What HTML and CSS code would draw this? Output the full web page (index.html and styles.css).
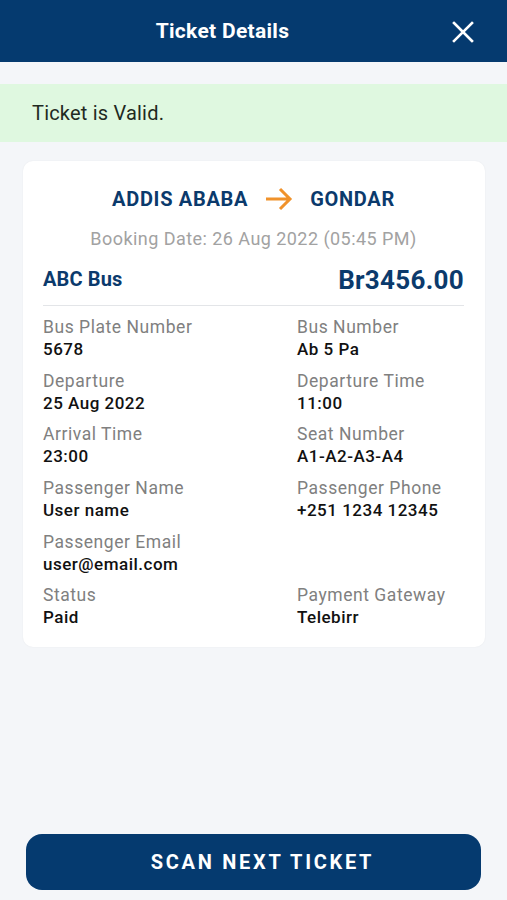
FILE: index.html
```html
<!DOCTYPE html>
<html>
<head>
<meta charset="utf-8">
<link rel="stylesheet" href="styles.css">
</head>
<body>
<div class="screen">
  <header class="topbar">
    <span class="title">Ticket Details</span>
    <span class="close">
      <svg width="22" height="22" viewBox="0 0 22 22"><path d="M2 2 L20 20 M20 2 L2 20" stroke="#fff" stroke-width="2.6" stroke-linecap="square" fill="none"/></svg>
    </span>
  </header>
  <div class="banner">Ticket is Valid.</div>
  <section class="card">
    <div class="route">
      <span>ADDIS ABABA</span>
      <svg class="arrow" width="28" height="24" viewBox="0 0 28 24"><path d="M1 12 H25 M15 2 L25 12 L15 22" stroke="#f0922b" stroke-width="3" fill="none" stroke-linejoin="miter"/></svg>
      <span>GONDAR</span>
    </div>
    <div class="booking">Booking Date: 26 Aug 2022 (05:45 PM)</div>
    <div class="operator">
      <span class="bus">ABC Bus</span>
      <span class="price">Br3456.00</span>
    </div>
    <div class="divider"></div>
    <div class="grid">
      <div class="field"><div class="label">Bus Plate Number</div><div class="value">5678</div></div>
      <div class="field"><div class="label">Bus Number</div><div class="value">Ab 5 Pa</div></div>
      <div class="field"><div class="label">Departure</div><div class="value">25 Aug 2022</div></div>
      <div class="field"><div class="label">Departure Time</div><div class="value">11:00</div></div>
      <div class="field"><div class="label">Arrival Time</div><div class="value">23:00</div></div>
      <div class="field"><div class="label">Seat Number</div><div class="value">A1-A2-A3-A4</div></div>
      <div class="field"><div class="label">Passenger Name</div><div class="value">User name</div></div>
      <div class="field"><div class="label">Passenger Phone</div><div class="value">+251 1234 12345</div></div>
      <div class="field"><div class="label">Passenger Email</div><div class="value">user@email.com</div></div>
      <div class="field"></div>
      <div class="field"><div class="label">Status</div><div class="value">Paid</div></div>
      <div class="field"><div class="label">Payment Gateway</div><div class="value">Telebirr</div></div>
    </div>
  </section>
  <div class="footer">
    <button class="scan">SCAN NEXT TICKET</button>
  </div>
</div>
</body>
</html>
```
FILE: styles.css
```css
* { box-sizing: border-box; }
html, body { margin: 0; padding: 0; }
body {
  font-family: Roboto, "Noto Sans", sans-serif;
  background: #f4f6f9;
}
.screen {
  display: flex;
  flex-direction: column;
  min-height: 900px;
}
.topbar {
  height: 62px;
  background: #053a6f;
  display: flex;
  align-items: center;
  justify-content: center;
  padding-right: 62px;
  position: relative;
}
.title {
  color: #fff;
  font-size: 21px;
  font-weight: 700;
  letter-spacing: 0.3px;
}
.close {
  position: absolute;
  right: 33px;
  top: 21px;
  width: 22px;
  height: 22px;
  display: flex;
}
.banner {
  margin-top: 22px;
  height: 58px;
  background: #dff8e0;
  color: #1f2a22;
  font-size: 20px;
  display: flex;
  align-items: center;
  padding-left: 32px;
  letter-spacing: 0.2px;
}
.card {
  margin: 19px 22px 0 23px;
  background: #fff;
  border-radius: 10px;
  box-shadow: 0 0 2px rgba(0,0,0,0.06);
  padding: 25px 21px 19px 20px;
}
.route {
  display: flex;
  justify-content: center;
  align-items: center;
  gap: 17px;
  color: #0b3a6c;
  font-size: 20px;
  font-weight: 700;
  line-height: 26px;
  letter-spacing: 0.7px;
}
.booking {
  margin-top: 16px;
  text-align: center;
  color: #a2a2a2;
  font-size: 18px;
  line-height: 22px;
  letter-spacing: 0.45px;
}
.operator {
  margin-top: 15px;
  display: flex;
  justify-content: space-between;
  align-items: center;
  height: 30px;
  color: #0b3a6c;
  font-weight: 700;
}
.bus { font-size: 20px; margin-top: -3px; letter-spacing: 0.15px; }
.price { font-size: 26px; letter-spacing: 0.3px; }
.divider {
  margin-top: 10px;
  height: 1px;
  background: #e3e5e8;
}
.grid {
  margin-top: 10px;
  display: grid;
  grid-template-columns: 254px 1fr;
  row-gap: 9.7px;
}
.label {
  color: #808080;
  font-size: 17.5px;
  line-height: 22px;
  letter-spacing: 0.55px;
}
.value {
  color: #111;
  font-size: 17px;
  font-weight: 500;
  line-height: 22px;
  letter-spacing: 0.5px;
}
.footer {
  margin-top: auto;
  padding: 0 26px 10px 26px;
}
.scan {
  width: 100%;
  height: 56px;
  border: none;
  border-radius: 16px;
  background: #053a6f;
  color: #fff;
  font-family: Roboto, "Noto Sans", sans-serif;
  font-size: 20px;
  font-weight: 700;
  letter-spacing: 2.7px;
  padding-left: 24px;
  display: block;
}
```
